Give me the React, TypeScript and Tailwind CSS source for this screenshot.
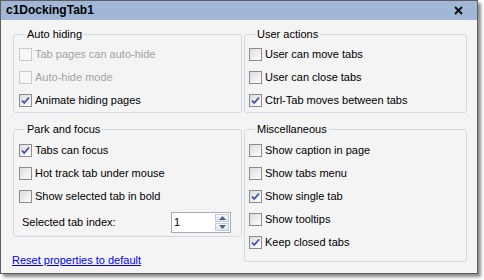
import type { ReactNode } from "react";

type Option = { label: string; checked?: boolean; disabled?: boolean };

const AUTO_HIDING: Option[] = [
  { label: "Tab pages can auto-hide", disabled: true },
  { label: "Auto-hide mode", disabled: true },
  { label: "Animate hiding pages", checked: true },
];

const USER_ACTIONS: Option[] = [
  { label: "User can move tabs" },
  { label: "User can close tabs" },
  { label: "Ctrl-Tab moves between tabs", checked: true },
];

const PARK_AND_FOCUS: Option[] = [
  { label: "Tabs can focus", checked: true },
  { label: "Hot track tab under mouse" },
  { label: "Show selected tab in bold" },
];

const MISC: Option[] = [
  { label: "Show caption in page" },
  { label: "Show tabs menu" },
  { label: "Show single tab", checked: true },
  { label: "Show tooltips" },
  { label: "Keep closed tabs", checked: true },
];

function CheckBox({ checked, disabled }: { checked?: boolean; disabled?: boolean }) {
  return (
    <span
      className={
        disabled
          ? "flex h-[13px] w-[13px] shrink-0 items-center justify-center border border-[#cacaca] bg-[#f7f7f7]"
          : "flex h-[13px] w-[13px] shrink-0 items-center justify-center border border-[#8c8c8c] bg-gradient-to-br from-[#dcdcdc] to-[#fdfdfd]"
      }
    >
      {checked && (
        <svg width="11" height="11" viewBox="0 0 11 11">
          <path d="M2 5.5 L4.2 8 L9 2.5" fill="none" stroke="#3d4fa6" strokeWidth="1.8" />
        </svg>
      )}
    </span>
  );
}

function OptionRow({ option }: { option: Option }) {
  return (
    <label className="flex h-[23px] items-center gap-[3px]">
      <CheckBox checked={option.checked} disabled={option.disabled} />
      <span className={option.disabled ? "text-[#a3a3a3]" : "text-black"}>{option.label}</span>
    </label>
  );
}

function Group({
  title,
  className,
  children,
}: {
  title: string;
  className: string;
  children: ReactNode;
}) {
  return (
    <fieldset className={`rounded-[3px] border border-[#d3d9e4] ${className}`}>
      <legend className="ml-[6px] px-[2px] leading-[13px]">{title}</legend>
      {children}
    </fieldset>
  );
}

function Spinner({ value }: { value: number }) {
  return (
    <div className="flex h-[21px] w-[60px] border border-[#a7adb5] bg-white">
      <span className="flex-1 pl-[2px] leading-[19px]">{value}</span>
      <div className="my-[1px] mr-[1px] flex w-[14px] flex-col gap-[1px]">
        <span className="flex flex-1 items-center justify-center border border-[#c4ccd8] bg-gradient-to-b from-[#f4f6fa] to-[#dde3ec]">
          <svg width="7" height="4" viewBox="0 0 7 4">
            <path d="M0 4 L3.5 0 L7 4 Z" fill="#4d6185" />
          </svg>
        </span>
        <span className="flex flex-1 items-center justify-center border border-[#c4ccd8] bg-gradient-to-b from-[#f4f6fa] to-[#dde3ec]">
          <svg width="7" height="4" viewBox="0 0 7 4">
            <path d="M0 0 L3.5 4 L7 0 Z" fill="#4d6185" />
          </svg>
        </span>
      </div>
    </div>
  );
}

export default function App() {
  return (
    <div className="h-[280px] w-[484px] bg-white font-['Liberation_Sans',Arial,sans-serif] text-[11px] leading-[13px] text-black">
      <div className="flex h-[274px] w-[478px] flex-col border border-[#5e5e5e] bg-[#f4f4f4] shadow-[3px_3px_3px_rgba(0,0,0,0.45)]">
        <div className="flex h-[19px] shrink-0 items-center justify-between bg-[#a0b7d8] pl-[5px] pr-[14px]">
          <span className="text-[12px] font-bold">c1DockingTab1</span>
          <svg width="9" height="9" viewBox="0 0 9 9">
            <path d="M1 1 L8 8 M8 1 L1 8" stroke="#111" strokeWidth="2" />
          </svg>
        </div>

        <div className="flex gap-[2px] pl-[12px] pt-[8px]">
          <div className="flex w-[229px] flex-col">
            <Group title="Auto hiding" className="pl-[5px] pt-[2px]">
              {AUTO_HIDING.map((o) => (
                <OptionRow key={o.label} option={o} />
              ))}
            </Group>
            <Group title="Park and focus" className="mt-[10px] pl-[5px] pt-[3px]">
              {PARK_AND_FOCUS.map((o) => (
                <OptionRow key={o.label} option={o} />
              ))}
              <div className="flex h-[28px] items-center pl-[3px]">
                <span className="w-[149px]">Selected tab index:</span>
                <Spinner value={1} />
              </div>
            </Group>
            <a href="#" className="-ml-[1px] mt-[17px] text-[#0000ee] underline">
              Reset properties to default
            </a>
          </div>

          <div className="flex w-[223px] flex-col">
            <Group title="User actions" className="pl-[4px] pt-[2px]">
              {USER_ACTIONS.map((o) => (
                <OptionRow key={o.label} option={o} />
              ))}
            </Group>
            <Group title="Miscellaneous" className="mt-[10px] pb-[7px] pl-[4px] pt-[3px]">
              {MISC.map((o) => (
                <OptionRow key={o.label} option={o} />
              ))}
            </Group>
          </div>
        </div>
      </div>
    </div>
  );
}
